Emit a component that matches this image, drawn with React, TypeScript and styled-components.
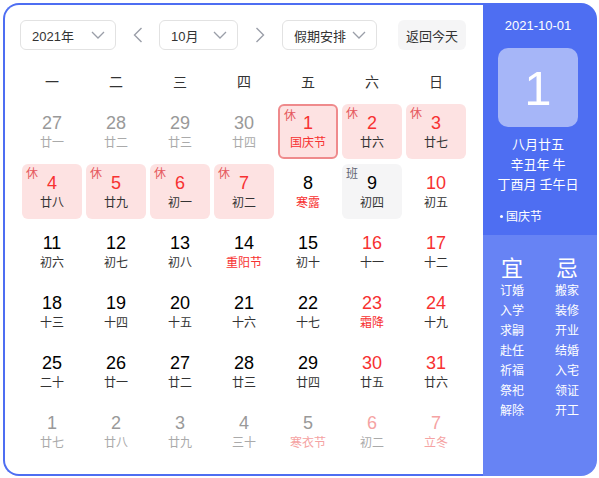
import React from 'react';
import styled, { createGlobalStyle, css } from 'styled-components';

const GlobalStyle = createGlobalStyle`
  html, body { margin: 0; padding: 0; background: #fff; }
  body { font-family: "Liberation Sans", "Noto Sans CJK SC", sans-serif; color: #333; }
`;

const BLUE = '#4e6ef2';
const RED = '#f73131';
const LIGHT_RED = '#f5a3a3';

const Shell = styled.div`
  margin: 3px;
  width: 594px;
  height: 473px;
  display: flex;
`;

const Main = styled.div`
  width: 480px;
  height: 100%;
  box-sizing: border-box;
  border: 2px solid ${BLUE};
  border-right: none;
  border-radius: 16px 0 0 16px;
  padding: 15px 0 0 15px;
`;

const Header = styled.div`
  display: flex;
  align-items: center;
  height: 30px;
`;

const Select = styled.div<{ $w: number }>`
  width: ${(p) => p.$w}px;
  height: 30px;
  box-sizing: border-box;
  border: 1px solid #e2e2e2;
  border-radius: 6px;
  padding: 0 10px 0 11px;
  display: flex;
  align-items: center;
  justify-content: space-between;
  font-size: 13px;
  color: #333;
`;

const ArrowBtn = styled.div<{ $w: number }>`
  width: ${(p) => p.$w}px;
  height: 30px;
  display: flex;
  align-items: center;
  justify-content: center;
`;

const TodayBtn = styled.div`
  margin-left: 21px;
  width: 68px;
  height: 30px;
  border-radius: 6px;
  background: #f5f5f6;
  display: flex;
  align-items: center;
  justify-content: center;
  font-size: 13px;
  color: #333;
`;

const Weekdays = styled.div`
  display: grid;
  grid-template-columns: repeat(7, 60px);
  column-gap: 4px;
  margin: 20px 0 0 2px;
  height: 24px;
  line-height: 24px;
  text-align: center;
  font-size: 14px;
  color: #333;
`;

const Grid = styled.div`
  display: grid;
  grid-template-columns: repeat(7, 60px);
  grid-auto-rows: 55px;
  gap: 5px 4px;
  margin: 10px 0 0 2px;
`;

type Kind = 'normal' | 'rest' | 'work';

const Cell = styled.div<{ $kind: Kind; $today?: boolean }>`
  position: relative;
  box-sizing: border-box;
  border-radius: 6px;
  display: flex;
  flex-direction: column;
  align-items: center;
  padding-top: 9px;
  background: ${(p) => (p.$kind === 'rest' ? '#fde2e2' : p.$kind === 'work' ? '#f5f5f6' : 'transparent')};
  ${(p) =>
    p.$today &&
    css`
      border: 2px solid #ef8a8c;
      padding-top: 7px;
    `}
`;

const Num = styled.div<{ $c: string }>`
  font-family: "Liberation Sans", sans-serif;
  font-size: 18px;
  line-height: 20px;
  color: ${(p) => p.$c};
`;

const Lunar = styled.div<{ $c: string }>`
  margin-top: 1px;
  font-family: "Noto Sans CJK SC", sans-serif;
  font-size: 12px;
  line-height: 16px;
  color: ${(p) => p.$c};
`;

const Badge = styled.span<{ $kind: Kind }>`
  position: absolute;
  top: 3px;
  left: 4px;
  font-family: "Noto Sans CJK SC", sans-serif;
  font-size: 12px;
  line-height: 12px;
  color: ${(p) => (p.$kind === 'rest' ? '#e5585c' : '#626675')};
`;

const Side = styled.div`
  width: 114px;
  height: 100%;
  display: flex;
  flex-direction: column;
  border-radius: 0 16px 16px 0;
  overflow: hidden;
`;

const SideTop = styled.div`
  height: 232px;
  background: ${BLUE};
  display: flex;
  flex-direction: column;
  align-items: center;
  padding: 13px 4px 0 0;
  box-sizing: border-box;
  color: #fff;
`;

const DateText = styled.div`
  font-family: "Liberation Sans", sans-serif;
  font-size: 13px;
  line-height: 20px;
`;

const BigDay = styled.div`
  margin-top: 12px;
  width: 80px;
  height: 79px;
  border-radius: 10px;
  background: #a6b6f8;
  display: flex;
  align-items: center;
  justify-content: center;
  font-family: "Liberation Sans", sans-serif;
  font-size: 49px;
  color: #fff;
`;

const LunarInfo = styled.div`
  margin-top: 7px;
  font-family: "Noto Sans CJK SC", sans-serif;
  font-size: 13px;
  line-height: 20px;
  text-align: center;
`;

const Fest = styled.div`
  align-self: flex-start;
  margin: 14px 0 0 17px;
  display: flex;
  align-items: center;
  gap: 3px;
  font-family: "Noto Sans CJK SC", sans-serif;
  font-size: 12px;
  line-height: 16px;
  &::before {
    content: '';
    width: 3px;
    height: 3px;
    border-radius: 50%;
    background: #fff;
  }
`;

const SideBottom = styled.div`
  flex: 1;
  background: #6783f4;
  display: flex;
  gap: 31px;
  padding: 18px 0 0 17px;
  color: #fff;
`;

const YiJi = styled.div`
  width: 24px;
  display: flex;
  flex-direction: column;
  align-items: center;
  font-family: "Noto Sans CJK SC", sans-serif;
`;

const YiJiHead = styled.div`
  font-size: 22px;
  line-height: 26px;
  margin-bottom: 1px;
`;

const YiJiItem = styled.div`
  font-size: 12px;
  line-height: 20px;
  white-space: nowrap;
`;

const Chevron = () => (
  <svg width="14" height="8" viewBox="0 0 14 8" fill="none">
    <path d="M1 1 L7 7 L13 1" stroke="#9a9ea8" strokeWidth="1.3" />
  </svg>
);

const Arrow = ({ dir }: { dir: 'l' | 'r' }) => (
  <svg width="10" height="16" viewBox="0 0 10 16" fill="none">
    <path d={dir === 'l' ? 'M8.5 1 L1.5 8 L8.5 15' : 'M1.5 1 L8.5 8 L1.5 15'} stroke="#9a9ea8" strokeWidth="1.4" />
  </svg>
);

type Day = {
  n: number;
  l: string;
  other?: boolean;
  weekend?: boolean;
  fest?: boolean;
  kind?: Kind;
  badge?: string;
  today?: boolean;
};

const days: Day[] = [
  { n: 27, l: '廿一', other: true },
  { n: 28, l: '廿二', other: true },
  { n: 29, l: '廿三', other: true },
  { n: 30, l: '廿四', other: true },
  { n: 1, l: '国庆节', fest: true, kind: 'rest', badge: '休', today: true },
  { n: 2, l: '廿六', kind: 'rest', badge: '休' },
  { n: 3, l: '廿七', kind: 'rest', badge: '休' },
  { n: 4, l: '廿八', kind: 'rest', badge: '休' },
  { n: 5, l: '廿九', kind: 'rest', badge: '休' },
  { n: 6, l: '初一', kind: 'rest', badge: '休' },
  { n: 7, l: '初二', kind: 'rest', badge: '休' },
  { n: 8, l: '寒露', fest: true },
  { n: 9, l: '初四', kind: 'work', badge: '班' },
  { n: 10, l: '初五', weekend: true },
  { n: 11, l: '初六' },
  { n: 12, l: '初七' },
  { n: 13, l: '初八' },
  { n: 14, l: '重阳节', fest: true },
  { n: 15, l: '初十' },
  { n: 16, l: '十一', weekend: true },
  { n: 17, l: '十二', weekend: true },
  { n: 18, l: '十三' },
  { n: 19, l: '十四' },
  { n: 20, l: '十五' },
  { n: 21, l: '十六' },
  { n: 22, l: '十七' },
  { n: 23, l: '霜降', weekend: true, fest: true },
  { n: 24, l: '十九', weekend: true },
  { n: 25, l: '二十' },
  { n: 26, l: '廿一' },
  { n: 27, l: '廿二' },
  { n: 28, l: '廿三' },
  { n: 29, l: '廿四' },
  { n: 30, l: '廿五', weekend: true },
  { n: 31, l: '廿六', weekend: true },
  { n: 1, l: '廿七', other: true },
  { n: 2, l: '廿八', other: true },
  { n: 3, l: '廿九', other: true },
  { n: 4, l: '三十', other: true },
  { n: 5, l: '寒衣节', other: true, fest: true },
  { n: 6, l: '初二', other: true, weekend: true },
  { n: 7, l: '立冬', other: true, weekend: true, fest: true },
];

function numColor(d: Day) {
  if (d.other) return d.weekend ? LIGHT_RED : '#999';
  if (d.kind === 'rest') return RED;
  if (d.weekend) return RED;
  return '#000';
}

function lunarColor(d: Day) {
  if (d.other) return d.fest ? LIGHT_RED : '#aaa';
  if (d.fest) return RED;
  return '#333';
}

const yi = ['订婚', '入学', '求嗣', '赴任', '祈福', '祭祀', '解除'];
const ji = ['搬家', '装修', '开业', '结婚', '入宅', '领证', '开工'];

export default function App() {
  return (
    <>
      <GlobalStyle />
      <Shell>
        <Main>
          <Header>
            <Select $w={96}>
              <span>2021年</span>
              <Chevron />
            </Select>
            <ArrowBtn $w={43}>
              <Arrow dir="l" />
            </ArrowBtn>
            <Select $w={79}>
              <span>10月</span>
              <Chevron />
            </Select>
            <ArrowBtn $w={44}>
              <Arrow dir="r" />
            </ArrowBtn>
            <Select $w={95}>
              <span>假期安排</span>
              <Chevron />
            </Select>
            <TodayBtn>返回今天</TodayBtn>
          </Header>
          <Weekdays>
            {['一', '二', '三', '四', '五', '六', '日'].map((w) => (
              <div key={w}>{w}</div>
            ))}
          </Weekdays>
          <Grid>
            {days.map((d, i) => (
              <Cell key={i} $kind={d.kind ?? 'normal'} $today={d.today}>
                {d.badge && <Badge $kind={d.kind ?? 'normal'}>{d.badge}</Badge>}
                <Num $c={numColor(d)}>{d.n}</Num>
                <Lunar $c={lunarColor(d)}>{d.l}</Lunar>
              </Cell>
            ))}
          </Grid>
        </Main>
        <Side>
          <SideTop>
            <DateText>2021-10-01</DateText>
            <BigDay>1</BigDay>
            <LunarInfo>
              <div>八月廿五</div>
              <div>辛丑年 牛</div>
              <div>丁酉月 壬午日</div>
            </LunarInfo>
            <Fest>国庆节</Fest>
          </SideTop>
          <SideBottom>
            <YiJi>
              <YiJiHead>宜</YiJiHead>
              {yi.map((t) => (
                <YiJiItem key={t}>{t}</YiJiItem>
              ))}
            </YiJi>
            <YiJi>
              <YiJiHead>忌</YiJiHead>
              {ji.map((t) => (
                <YiJiItem key={t}>{t}</YiJiItem>
              ))}
            </YiJi>
          </SideBottom>
        </Side>
      </Shell>
    </>
  );
}
